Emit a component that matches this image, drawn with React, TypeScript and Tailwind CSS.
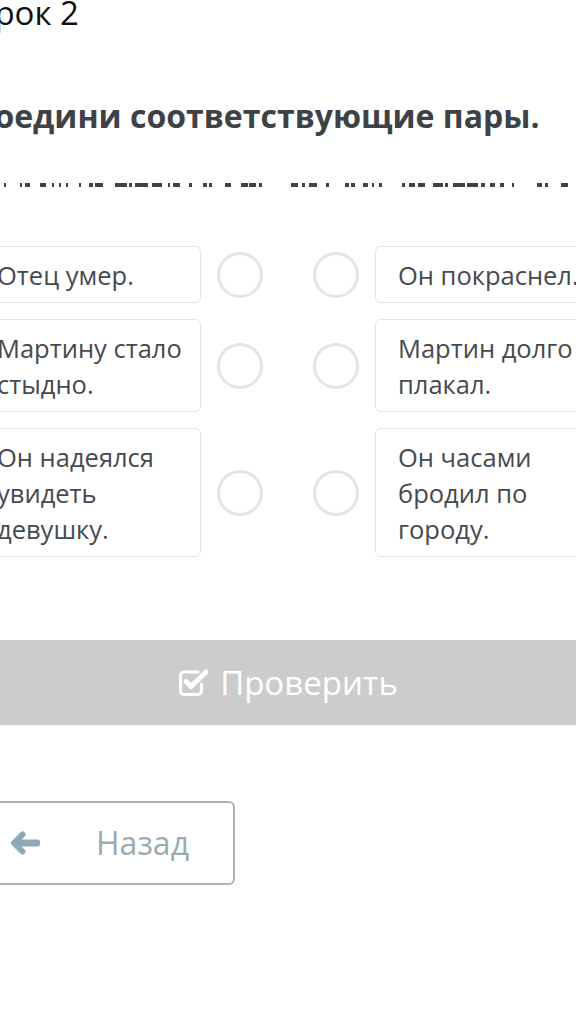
const leftItems = [
  ["Отец умер."],
  ["Мартину стало", "стыдно."],
  ["Он надеялся", "увидеть", "девушку."],
];

const rightItems = [
  ["Он покраснел."],
  ["Мартин долго", "плакал."],
  ["Он часами", "бродил по", "городу."],
];

// dashes of the squashed line under the task, screen x coords
const dashes: [number, number][] = [
  [4, 6], [20, 22], [25, 30], [40, 46], [52, 54], [59, 61], [66, 68], [79, 81],
  [89, 93], [95, 103], [115, 127], [129, 132], [135, 148], [152, 162], [168, 170],
  [173, 180], [189, 192], [203, 207], [209, 212], [225, 231], [241, 248], [249, 256],
  [259, 262], [291, 298], [302, 305], [309, 317], [326, 329], [345, 349], [351, 355],
  [363, 368], [372, 374], [379, 382], [402, 405], [409, 415], [418, 425], [433, 443],
  [445, 448], [453, 465], [467, 478], [481, 485], [490, 495], [500, 504], [512, 514],
  [537, 542], [545, 548], [561, 568],
];

const Card = ({ lines }: { lines: string[] }) => (
  <div className="w-[227px] rounded-[6px] border border-[#e2e4e6] bg-white pl-[22px] pr-4 py-[9.5px] text-[25.5px] leading-[36px] text-[#464a4f]">
    {lines.map((l, i) => (
      <div key={i} className="whitespace-nowrap">
        {l}
      </div>
    ))}
  </div>
);

const Dot = () => (
  <div className="h-[46px] w-[46px] rounded-full border-[3px] border-[#e1e5e5]" />
);

const CheckIcon = () => (
  <svg width="34" height="29" viewBox="0 0 34 29" fill="none">
    <path
      d="M20 4 H6 a3.5 3.5 0 0 0 -3.5 3.5 V23 a3.5 3.5 0 0 0 3.5 3.5 H20 a3.5 3.5 0 0 0 3.5 -3.5 V16"
      stroke="white"
      strokeWidth="3.2"
      strokeLinecap="round"
    />
    <path
      d="M8 13.5 L13 18.5 L28 4"
      stroke="white"
      strokeWidth="5"
      strokeLinecap="round"
      strokeLinejoin="round"
    />
  </svg>
);

const ArrowIcon = () => (
  <svg width="30" height="24" viewBox="0 0 30 24" fill="none">
    <path
      d="M12.5 3.5 L4 12 L12.5 20.5"
      stroke="#8ea8b8"
      strokeWidth="6"
      strokeLinecap="round"
      strokeLinejoin="round"
    />
    <path d="M6 12 H27" stroke="#8ea8b8" strokeWidth="7" strokeLinecap="round" />
  </svg>
);

export default function App() {
  return (
    <div className="w-[576px] h-[1020px] overflow-hidden bg-white font-['Open_Sans',sans-serif]">
      <div className="w-[628px] -ml-[26px]">
        {/* Title */}
        <div className="-mt-[5px] text-[33px] leading-[36px] text-[#111]">Урок 2</div>

        {/* Task */}
        <h2 className="mt-[65px] text-[32px] font-bold leading-[40px] text-[#3d4247] whitespace-nowrap">
          Соедини соответствующие пары.
        </h2>

        <svg width="628" height="6" className="mt-[46px] block">
          {dashes.map(([a, b], i) => (
            <rect key={i} x={a + 26} y={1} width={b - a} height={4} fill="#3f4348" />
          ))}
        </svg>

        {/* Pairs */}
        <div className="mt-[58px] flex flex-col gap-4">
          {leftItems.map((l, i) => (
            <div key={i} className="flex items-center">
              <Card lines={l} />
              <div className="ml-4">
                <Dot />
              </div>
              <div className="ml-[50px]">
                <Dot />
              </div>
              <div className="ml-4">
                <Card lines={rightItems[i]} />
              </div>
            </div>
          ))}
        </div>

        {/* Check */}
        <div className="mt-[83px] flex h-[85px] items-center justify-center gap-[8px] bg-[#cccccc] text-[33px] text-white">
          <CheckIcon />
          <span>Проверить</span>
        </div>

        {/* Back */}
        <div className="mt-[76px] flex h-[84px] w-[261px] items-center rounded-[6px] border-2 border-[#aab5b6] bg-white">
          <div className="ml-[34px] flex">
            <ArrowIcon />
          </div>
          <span className="ml-[56px] text-[32px] text-[#9aabb1]">Назад</span>
        </div>
      </div>
    </div>
  );
}
